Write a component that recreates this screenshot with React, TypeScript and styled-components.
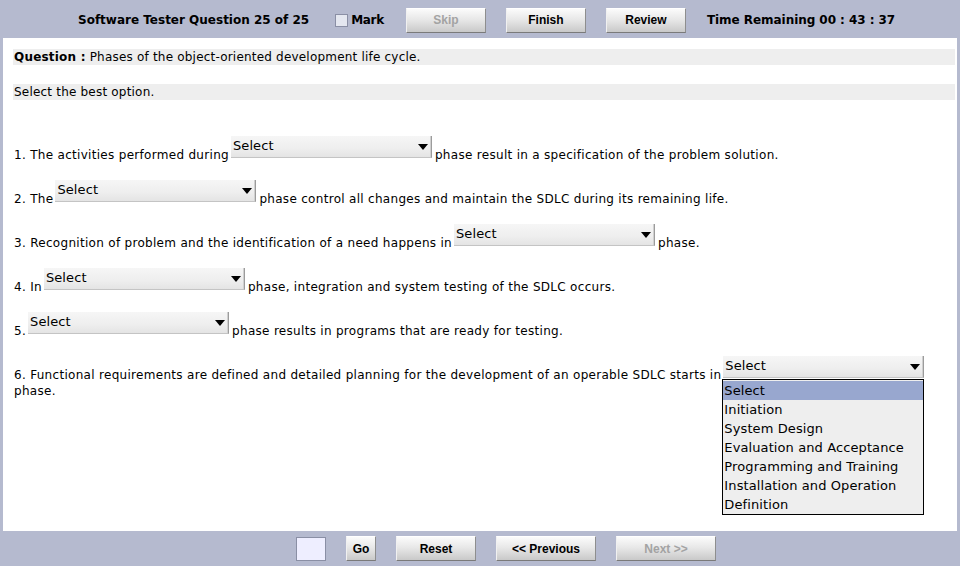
import React from 'react';
import styled, { createGlobalStyle } from 'styled-components';

const GlobalStyle = createGlobalStyle`
  html, body {
    margin: 0;
    padding: 0;
  }
  body {
    width: 960px;
    height: 566px;
    overflow: hidden;
    background: #b5bacf;
    font-family: "DejaVu Sans", Verdana, sans-serif;
    color: #000;
  }
`;

const Page = styled.div`
  display: flex;
  flex-direction: column;
  width: 960px;
  height: 566px;
`;

const TopBar = styled.div`
  display: flex;
  align-items: center;
  height: 38px;
  padding: 2px 0 0 78px;
  box-sizing: border-box;
`;

const Title = styled.div`
  font-size: 12px;
  font-weight: bold;
  margin-right: 26px;
`;

const MarkLabel = styled.label`
  display: flex;
  align-items: center;
  gap: 3px;
  font-size: 12px;
  font-weight: bold;
  letter-spacing: -0.3px;
  margin-right: 22px;
`;

const CheckBox = styled.span`
  display: inline-block;
  width: 11px;
  height: 11px;
  border: 1px solid #8a8fa5;
  background: #e4e7f0;
`;

const Button = styled.button<{ $w: number; $disabled?: boolean }>`
  width: ${({ $w }) => $w}px;
  height: 25px;
  margin-right: 20px;
  padding: 0;
  box-sizing: border-box;
  font-family: "Liberation Sans", Arial, sans-serif;
  font-size: 12px;
  font-weight: bold;
  color: ${({ $disabled }) => ($disabled ? '#a3a3a3' : '#000')};
  background: linear-gradient(#fbfbfb, #e8e8e8 45%, #c9c9c9);
  border: 1px solid;
  border-color: #ffffff #8e8e8e #7a7a7a #f0f0f0;
  cursor: default;
`;

const Timer = styled.div`
  font-size: 12px;
  font-weight: bold;
  letter-spacing: -0.05px;
  margin-left: 1px;
`;

const Panel = styled.div`
  flex: 1;
  margin: 0 3px;
  background: #fff;
  padding: 11px 2px 0 10px;
`;

const Stripe = styled.div`
  background: #eeeeee;
  height: 16px;
  line-height: 17px;
  font-size: 12px;
  letter-spacing: 0.2px;
  padding-left: 1px;
  margin-bottom: 19px;
`;

const Questions = styled.div`
  padding-top: 17px;
  padding-left: 1px;
  font-size: 12px;
  letter-spacing: 0.3px;
  line-height: 16px;
`;

const Item = styled.div`
  margin-bottom: 17px;
  width: 920px;
`;

const ComboWrap = styled.span`
  position: relative;
  display: inline-block;
  vertical-align: 9px;
  margin: 0 3px 0 2px;
  letter-spacing: 0.1px;
`;

const ComboBox = styled.span`
  display: block;
  position: relative;
  width: 201px;
  height: 22px;
  box-sizing: border-box;
  padding-left: 2px;
  font-size: 13px;
  line-height: 20px;
  background: linear-gradient(#f6f6f6, #eeeeee 60%, #e4e4e4);
  border-right: 1px solid #9c9c9c;
  border-bottom: 1px solid #c4c4c4;
  box-shadow: inset -1px 0 0 #d0d0d0;
`;

const Arrow = styled.span`
  position: absolute;
  right: 3px;
  top: 8px;
  width: 0;
  height: 0;
  border-left: 5px solid transparent;
  border-right: 5px solid transparent;
  border-top: 6px solid #000;
`;

const DropList = styled.ul`
  position: absolute;
  left: -1px;
  top: 23px;
  width: 200px;
  margin: 0;
  padding: 1px 0 0;
  list-style: none;
  background: #eeeeee;
  border: 1px solid #000;
  font-size: 13px;
  line-height: 19px;
  z-index: 2;
`;

const DropItem = styled.li<{ $active?: boolean }>`
  padding-left: 1px;
  height: 19px;
  background: ${({ $active }) => ($active ? '#98a7cf' : 'transparent')};
`;

const BottomBar = styled.div`
  display: flex;
  align-items: center;
  height: 35px;
  padding-left: 296px;
  box-sizing: border-box;
`;

const PageInput = styled.input`
  width: 30px;
  height: 24px;
  box-sizing: border-box;
  margin: 0 20px 0 0;
  border: 1px solid #8a8fa5;
  background: #eeeeff;
`;

const options = [
  'Select',
  'Initiation',
  'System Design',
  'Evaluation and Acceptance',
  'Programming and Training',
  'Installation and Operation',
  'Definition',
];

const Combo: React.FC<{ open?: boolean }> = ({ open }) => (
  <ComboWrap>
    <ComboBox>
      Select
      <Arrow />
    </ComboBox>
    {open && (
      <DropList>
        {options.map((o, i) => (
          <DropItem key={o} $active={i === 0}>
            {o}
          </DropItem>
        ))}
      </DropList>
    )}
  </ComboWrap>
);

export default function App() {
  return (
    <Page>
      <GlobalStyle />
      <TopBar>
        <Title>Software Tester Question 25 of 25</Title>
        <MarkLabel>
          <CheckBox />
          Mark
        </MarkLabel>
        <Button $w={80} $disabled>
          Skip
        </Button>
        <Button $w={80}>Finish</Button>
        <Button $w={80}>Review</Button>
        <Timer>Time Remaining 00 : 43 : 37</Timer>
      </TopBar>
      <Panel>
        <Stripe>
          <b>Question :</b> Phases of the object-oriented development life cycle.
        </Stripe>
        <Stripe>Select the best option.</Stripe>
        <Questions>
          <Item>
            1. The activities performed during
            <Combo />
            phase result in a specification of the problem solution.
          </Item>
          <Item>
            2. The
            <Combo />
            phase control all changes and maintain the SDLC during its remaining life.
          </Item>
          <Item>
            3. Recognition of problem and the identification of a need happens in
            <Combo />
            phase.
          </Item>
          <Item>
            4. In
            <Combo />
            phase, integration and system testing of the SDLC occurs.
          </Item>
          <Item>
            5.
            <Combo />
            phase results in programs that are ready for testing.
          </Item>
          <Item>
            6. Functional requirements are defined and detailed planning for the development of an operable SDLC starts in
            <Combo open />
            phase.
          </Item>
        </Questions>
      </Panel>
      <BottomBar>
        <PageInput />
        <Button $w={30}>Go</Button>
        <Button $w={80}>Reset</Button>
        <Button $w={100}>&lt;&lt; Previous</Button>
        <Button $w={100} $disabled>
          Next &gt;&gt;
        </Button>
      </BottomBar>
    </Page>
  );
}
